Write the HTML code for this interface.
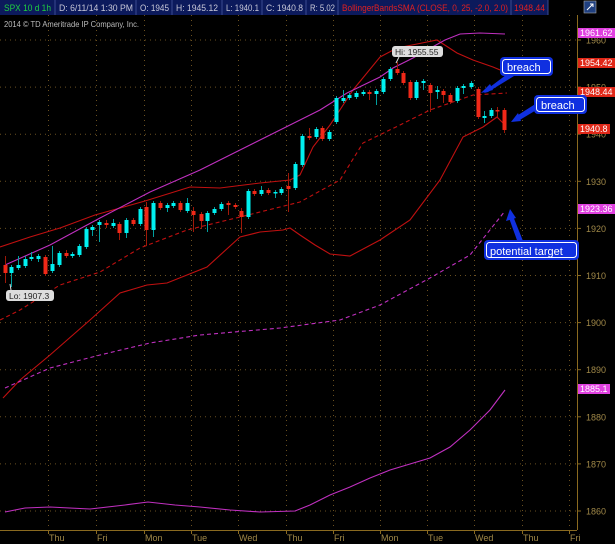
<!DOCTYPE html>
<html><head><meta charset="utf-8"><style>
html,body{margin:0;padding:0;background:#000;width:615px;height:544px;overflow:hidden}
svg{display:block}
text{font-family:"Liberation Sans",sans-serif}
</style></head><body>
<svg id="s" width="615" height="544" viewBox="0 0 615 544" xmlns="http://www.w3.org/2000/svg">
<rect width="615" height="544" fill="#000"/>
<!-- header -->
<rect x="0" y="0" width="548" height="15" fill="#0c1a5c"/>
<g stroke="#3a4a90" stroke-width="1">
<line x1="55" y1="0" x2="55" y2="15"/><line x1="136" y1="0" x2="136" y2="15"/><line x1="172" y1="0" x2="172" y2="15"/><line x1="222" y1="0" x2="222" y2="15"/><line x1="262" y1="0" x2="262" y2="15"/><line x1="306" y1="0" x2="306" y2="15"/><line x1="338" y1="0" x2="338" y2="15"/><line x1="511" y1="0" x2="511" y2="15"/><line x1="548" y1="0" x2="548" y2="15"/>
</g>
<g font-size="9" lengthAdjust="spacingAndGlyphs">
<text x="4" y="11" fill="#20d040" textLength="47" lengthAdjust="spacingAndGlyphs">SPX 10 d 1h</text>
<text x="59" y="11" fill="#c8c8d8" textLength="74" lengthAdjust="spacingAndGlyphs">D: 6/11/14 1:30 PM</text>
<text x="140" y="11" fill="#c8c8d8" textLength="29" lengthAdjust="spacingAndGlyphs">O: 1945</text>
<text x="176" y="11" fill="#c8c8d8" textLength="42" lengthAdjust="spacingAndGlyphs">H: 1945.12</text>
<text x="226" y="11" fill="#c8c8d8" textLength="33" lengthAdjust="spacingAndGlyphs">L: 1940.1</text>
<text x="266" y="11" fill="#c8c8d8" textLength="37" lengthAdjust="spacingAndGlyphs">C: 1940.8</text>
<text x="310" y="11" fill="#c8c8d8" textLength="25" lengthAdjust="spacingAndGlyphs">R: 5.02</text>
<text x="342" y="11" fill="#e02020" textLength="166" lengthAdjust="spacingAndGlyphs">BollingerBandsSMA (CLOSE, 0, 25, -2.0, 2.0)</text>
<text x="514" y="11" fill="#e02020" textLength="31" lengthAdjust="spacingAndGlyphs">1948.44</text>
</g>
<rect x="584" y="1" width="12" height="12" fill="#204080" stroke="#aaa" stroke-width="0.6"/>
<path d="M587 10 L593 4 M590 4 L593 4 L593 7" stroke="#fff" stroke-width="1" fill="none"/>
<text x="4" y="27" fill="#bbb" font-size="8.5" textLength="135" lengthAdjust="spacingAndGlyphs">2014 © TD Ameritrade IP Company, Inc.</text>
<g id="grid"></g>
<!-- axes -->
<line x1="577.5" y1="15" x2="577.5" y2="530" stroke="#8a6a20"/>
<line x1="0" y1="530.5" x2="577" y2="530.5" stroke="#8a6a20"/>
<g id="axis" font-size="9" fill="#a08848"></g>
<g id="days" font-size="9" fill="#a08848"></g>
<!-- indicators -->
<g fill="none" stroke-width="1.1">
<polyline stroke="#c01010" points="0,247 30,237 60,228 95,215 145,201 190,187 220,188 260,183 290,180 300,175 313,147 330,125 353,90 380,57 397,48 427,42 437,40 457,53 473,60 493,67 505,72"/>
<polyline stroke="#c01010" points="3,398 20,380 50,355 90,320 120,293 147,285 167,283 207,267 240,237 260,232 283,230 290,228 300,235 315,245 330,254 350,256 380,240 410,220 440,180 463,137 483,127 497,117 503,123"/>
<polyline stroke="#c01010" stroke-dasharray="4,3" points="0,320 20,310 60,285 100,272 140,248 187,230 240,217 300,202 340,180 363,143 400,125 430,110 473,95 507,93"/>
<polyline stroke="#c030c0" points="5,265 50,245 100,218 150,192 200,170 240,150 280,130 320,110 347,93 380,77 393,68 413,58 427,50 445,40 460,34 480,33 505,34"/>
<polyline stroke="#c030c0" stroke-dasharray="4,3" points="5,388 50,368 100,355 150,343 200,335 280,328 340,320 380,305 430,278 470,255 505,211"/>
<polyline stroke="#c030c0" points="5,512 25,508 50,507 90,509 125,505 148,502 175,505 200,507 230,510 260,512 295,511 310,505 330,495 350,487 370,478 390,470 410,464 430,458 450,447 470,430 490,410 505,390"/>
</g>
<g id="candles"></g>
<!-- labels -->
<rect x="392" y="46" width="51" height="11" rx="3" fill="#ddd"/>
<text x="395" y="55" font-size="8.5" fill="#222">Hi: 1955.55</text>
<line x1="399" y1="57" x2="396" y2="63" stroke="#ddd"/>
<rect x="6" y="290" width="48" height="11" rx="3" fill="#ddd"/>
<text x="9" y="299" font-size="8.5" fill="#222">Lo: 1907.3</text>
<line x1="11" y1="290" x2="10" y2="284" stroke="#ddd"/>
<!-- price tags -->
<g font-size="9" fill="#fff">
<rect x="578" y="28" width="37" height="10" fill="#e040e0"/><text x="580" y="36">1961.62</text>
<rect x="578" y="58" width="37" height="10" fill="#e02818"/><text x="580" y="66">1954.42</text>
<rect x="578" y="87" width="37" height="10" fill="#e02818"/><text x="580" y="95">1948.44</text>
<rect x="578" y="124" width="32" height="10" fill="#e02818"/><text x="580" y="132">1940.8</text>
<rect x="578" y="204" width="37" height="10" fill="#e040e0"/><text x="580" y="212">1923.36</text>
<rect x="578" y="384" width="32" height="10" fill="#e040e0"/><text x="580" y="392">1885.1</text>
</g>
<!-- callouts -->
<g fill="#1030e0">
<path d="M510 72 L486 90 L484 93 L488 92 L514 76 Z"/>
<path d="M481 93 L490 84 L493 90 Z"/>
<path d="M540 101 L515 117 L518 121 L543 106 Z"/>
<path d="M511 122 L518 113 L521 121 Z"/>
<path d="M523 241 L513 216 L509 218 L518 243 Z"/>
<path d="M510 209 L506 221 L516 218 Z"/>
</g>
<g font-size="11" fill="#fff">
<rect x="500" y="57" width="53" height="19" rx="4" fill="#1030e0"/><rect x="502.5" y="59.5" width="48" height="14" rx="3" fill="none" stroke="#fff"/><text x="507" y="71">breach</text>
<rect x="534" y="95" width="53" height="19" rx="4" fill="#1030e0"/><rect x="536.5" y="97.5" width="48" height="14" rx="3" fill="none" stroke="#fff"/><text x="541" y="109">breach</text>
<rect x="484" y="240" width="95" height="20" rx="4" fill="#1030e0"/><rect x="486.5" y="242.5" width="90" height="15" rx="3" fill="none" stroke="#fff"/><text x="490" y="255">potential target</text>
</g>
</svg>
<script>
var NS="http://www.w3.org/2000/svg";
function el(p,t,a){var e=document.createElementNS(NS,t);for(var k in a)e.setAttribute(k,a[k]);p.appendChild(e);return e;}
var g=document.getElementById('grid');
var xs=[48,96,144,191,238,286,333,380,427,474,522,569];
xs.forEach(function(x){el(g,'line',{x1:x+.5,y1:15,x2:x+.5,y2:530,stroke:'#6a5020','stroke-dasharray':'1,4'});});
var ax=document.getElementById('axis');
for(var p=1960;p>=1860;p-=10){var y=40+(1960-p)*4.71;
el(g,'line',{x1:0,y1:y,x2:577,y2:y,stroke:'#6a5020','stroke-dasharray':'1,4'});
el(ax,'line',{x1:577,y1:y,x2:581,y2:y,stroke:'#8a6a20'});
var t=el(ax,'text',{x:586,y:y+3.5});t.textContent=p;}
var dn=['Thu','Fri','Mon','Tue','Wed','Thu','Fri','Mon','Tue','Wed','Thu','Fri'];
var dd=document.getElementById('days');
xs.forEach(function(x,i){el(dd,'line',{x1:x+.5,y1:530,x2:x+.5,y2:534,stroke:'#8a6a20'});var t=el(dd,'text',{x:x+1,y:541});t.textContent=dn[i];});
var C='c',R='r';
var d=[[5,265,273,256,283,R],[11,267,273,265,287,C],[18,265,268,256,270,C],[25,259,266,256,268,C],[31,257,259,252,261,C],[38,256,259,254,262,C],[45,257,274,255,276,R],[52,264,271,246,273,C],[59,253,265,251,267,C],[66,253,256,250,258,R],[72,254,256,252,258,C],[79,246,255,244,257,C],[86,229,247,227,249,C],[92,227,230,225,236,C],[99,222,225,220,242,C],[106,223,225,220,228,R],[113,223,226,219,228,C],[119,224,233,222,240,R],[126,220,233,218,238,C],[133,220,224,218,226,R],[140,209,224,207,226,C],[146,207,230,202,246,R],[153,203,230,201,237,C],[160,203,208,201,210,R],[167,205,208,203,212,C],[173,203,206,201,208,C],[180,203,210,201,212,R],[187,203,211,198,213,C],[193,211,215,207,232,R],[201,214,221,212,229,R],[207,213,221,211,232,C],[214,209,213,207,215,C],[221,204,209,202,211,C],[228,203,205,201,215,R],[235,205,207,203,209,R],[241,211,217,208,233,R],[248,191,217,189,219,C],[254,191,194,189,196,R],[261,190,194,186,196,C],[268,190,193,188,195,R],[275,192,193,190,198,C],[281,189,193,187,195,C],[288,186,189,173,212,R],[295,164,188,162,190,C],[302,136,165,134,167,C],[309,136,138,128,140,R],[316,129,137,127,139,C],[322,128,139,126,141,R],[329,132,139,130,141,C],[336,98,122,96,124,C],[343,98,101,90,103,C],[349,95,98,93,100,C],[356,93,97,91,99,C],[363,92,94,90,96,C],[369,92,94,90,100,R],[376,91,94,89,105,C],[383,79,92,77,94,C],[390,69,79,67,81,C],[397,69,73,62,75,R],[403,73,83,71,85,R],[410,82,98,80,100,R],[416,82,98,80,100,C],[423,81,83,79,90,C],[430,85,93,83,112,R],[437,90,92,86,99,C],[443,91,95,89,103,R],[450,95,102,93,104,R],[457,88,101,86,103,C],[463,86,88,84,94,C],[471,83,87,81,89,C],[478,89,117,87,119,R],[484,116,118,111,123,C],[491,110,116,108,118,C],[497,110,111,107,117,R],[504,110,130,108,133,R]];
var cg=document.getElementById('candles');
d.forEach(function(c){var col=c[5]==C?'#00f0f0':'#f02818',wc=c[5]==C?'#00a0a0':'#a01808';
el(cg,'line',{x1:c[0]+.5,y1:c[3],x2:c[0]+.5,y2:c[4],stroke:wc,'stroke-width':1});
el(cg,'rect',{x:c[0]-1.5,y:c[1],width:4,height:Math.max(1.5,c[2]-c[1]),fill:col});});
</script>
</body></html>
